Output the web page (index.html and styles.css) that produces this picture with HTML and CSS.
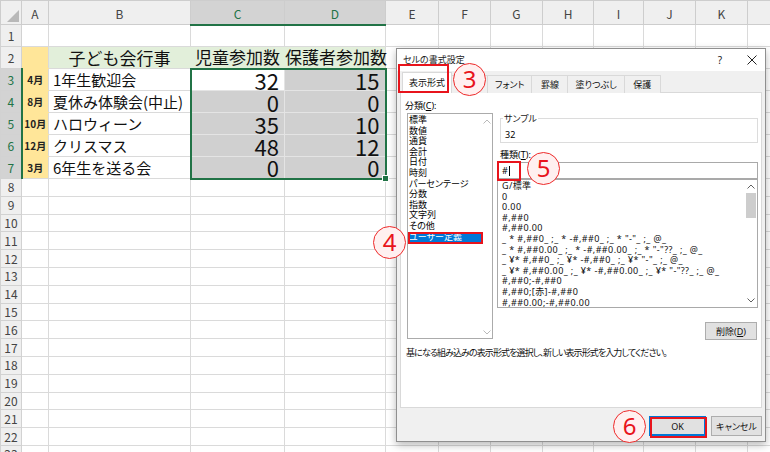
FILE: index.html
```html
<!DOCTYPE html>
<html lang="ja">
<head>
<meta charset="utf-8">
<title>セルの書式設定</title>
<link rel="stylesheet" href="styles.css">
</head>
<body>
<table class="sheet">
  <colgroup>
    <col class="w-rh"><col class="w-a"><col class="w-b"><col class="w-c"><col class="w-d"><col class="w-e"><col class="w-f"><col class="w-g"><col class="w-h"><col class="w-i"><col class="w-j"><col class="w-k"><col class="w-l">
  </colgroup>
  <thead>
    <tr><th class="corner"><span class="tri"></span></th><th>A</th><th>B</th><th class="sel">C</th><th class="sel">D</th><th>E</th><th>F</th><th>G</th><th>H</th><th>I</th><th>J</th><th>K</th><th>L</th></tr>
  </thead>
  <tbody>
    <tr class="tall"><th>1</th><td></td><td></td><td></td><td></td><td></td><td></td><td></td><td></td><td></td><td></td><td></td><td></td></tr>
    <tr class="tall"><th>2</th><td class="mon"></td><td class="hd">子ども会行事</td><td class="hd">児童参加数</td><td class="hd end">保護者参加数</td><td></td><td></td><td></td><td></td><td></td><td></td><td></td><td></td></tr>
    <tr class="tall"><th class="sel">3</th><td class="mon">4月</td><td class="ev">1年生歓迎会</td><td class="num act st sl">32</td><td class="num st sr">15</td><td></td><td></td><td></td><td></td><td></td><td></td><td></td><td></td></tr>
    <tr class="tall"><th class="sel">4</th><td class="mon">8月</td><td class="ev">夏休み体験会(中止)</td><td class="num sl">0</td><td class="num sr">0</td><td></td><td></td><td></td><td></td><td></td><td></td><td></td><td></td></tr>
    <tr class="tall"><th class="sel">5</th><td class="mon">10月</td><td class="ev">ハロウィーン</td><td class="num sl">35</td><td class="num sr">10</td><td></td><td></td><td></td><td></td><td></td><td></td><td></td><td></td></tr>
    <tr class="tall"><th class="sel">6</th><td class="mon">12月</td><td class="ev">クリスマス</td><td class="num sl">48</td><td class="num sr">12</td><td></td><td></td><td></td><td></td><td></td><td></td><td></td><td></td></tr>
    <tr class="tall"><th class="sel">7</th><td class="mon end">3月</td><td class="ev">6年生を送る会</td><td class="num sl sb">0</td><td class="num sr sb">0</td><td></td><td></td><td></td><td></td><td></td><td></td><td></td><td></td></tr>
    <tr class="sm"><th>8</th><td></td><td></td><td></td><td></td><td></td><td></td><td></td><td></td><td></td><td></td><td></td><td></td></tr>
    <tr class="sm"><th>9</th><td></td><td></td><td></td><td></td><td></td><td></td><td></td><td></td><td></td><td></td><td></td><td></td></tr>
    <tr class="sm"><th>10</th><td></td><td></td><td></td><td></td><td></td><td></td><td></td><td></td><td></td><td></td><td></td><td></td></tr>
    <tr class="sm"><th>11</th><td></td><td></td><td></td><td></td><td></td><td></td><td></td><td></td><td></td><td></td><td></td><td></td></tr>
    <tr class="sm"><th>12</th><td></td><td></td><td></td><td></td><td></td><td></td><td></td><td></td><td></td><td></td><td></td><td></td></tr>
    <tr class="sm"><th>13</th><td></td><td></td><td></td><td></td><td></td><td></td><td></td><td></td><td></td><td></td><td></td><td></td></tr>
    <tr class="sm"><th>14</th><td></td><td></td><td></td><td></td><td></td><td></td><td></td><td></td><td></td><td></td><td></td><td></td></tr>
    <tr class="sm"><th>15</th><td></td><td></td><td></td><td></td><td></td><td></td><td></td><td></td><td></td><td></td><td></td><td></td></tr>
    <tr class="sm"><th>16</th><td></td><td></td><td></td><td></td><td></td><td></td><td></td><td></td><td></td><td></td><td></td><td></td></tr>
    <tr class="sm"><th>17</th><td></td><td></td><td></td><td></td><td></td><td></td><td></td><td></td><td></td><td></td><td></td><td></td></tr>
    <tr class="sm"><th>18</th><td></td><td></td><td></td><td></td><td></td><td></td><td></td><td></td><td></td><td></td><td></td><td></td></tr>
    <tr class="sm"><th>19</th><td></td><td></td><td></td><td></td><td></td><td></td><td></td><td></td><td></td><td></td><td></td><td></td></tr>
    <tr class="sm"><th>20</th><td></td><td></td><td></td><td></td><td></td><td></td><td></td><td></td><td></td><td></td><td></td><td></td></tr>
    <tr class="sm"><th>21</th><td></td><td></td><td></td><td></td><td></td><td></td><td></td><td></td><td></td><td></td><td></td><td></td></tr>
    <tr class="sm"><th>22</th><td></td><td></td><td></td><td></td><td></td><td></td><td></td><td></td><td></td><td></td><td></td><td></td></tr>
    <tr class="sm"><th>23</th><td></td><td></td><td></td><td></td><td></td><td></td><td></td><td></td><td></td><td></td><td></td><td></td></tr>
  </tbody>
</table>
<div class="handle"></div>

<div class="dialog">
  <div class="titlebar">
    <span class="dtitle">セルの書式設定</span>
    <span class="help">?</span>
    <span class="close"><svg width="10" height="10" viewBox="0 0 10 10"><path d="M0.5 0.5L9.5 9.5M9.5 0.5L0.5 9.5" stroke="#222" stroke-width="1"/></svg></span>
  </div>
  <div class="dbody">
    <div class="tabs">
      <div class="tab on">表示形式</div>
      <div class="tab">配置</div>
      <div class="tab">フォント</div>
      <div class="tab">罫線</div>
      <div class="tab">塗りつぶし</div>
      <div class="tab">保護</div>
    </div>
    <div class="panel">
      <div class="prow">
        <div class="lcol">
          <div class="lbl">分類(<u>C</u>):</div>
          <div class="catlist">
            <div class="citems">
              <div>標準</div>
              <div>数値</div>
              <div>通貨</div>
              <div>会計</div>
              <div>日付</div>
              <div>時刻</div>
              <div>パーセンテージ</div>
              <div>分数</div>
              <div>指数</div>
              <div>文字列</div>
              <div>その他</div>
              <div class="on">ユーザー定義</div>
            </div>
            <div class="cscroll">
              <svg width="8" height="5" viewBox="0 0 8 5"><path d="M0.5 4.5L4 1L7.5 4.5" fill="none" stroke="#b9b9b9"/></svg>
              <svg width="8" height="5" viewBox="0 0 8 5"><path d="M0.5 0.5L4 4L7.5 0.5" fill="none" stroke="#b9b9b9"/></svg>
            </div>
          </div>
        </div>
        <div class="rcol">
          <fieldset class="sample">
            <legend>サンプル</legend>
            <div class="sval">32</div>
          </fieldset>
          <div class="lbl2">種類(<u>T</u>):</div>
          <div class="inp">#<span class="caret"></span></div>
          <div class="fmtlist">
            <div class="fitems">
              <div>G/標準</div>
              <div>0</div>
              <div>0.00</div>
              <div>#,##0</div>
              <div>#,##0.00</div>
              <div>_ * #,##0_ ;_ * -#,##0_ ;_ * "-"_ ;_ @_</div>
              <div>_ * #,##0.00_ ;_ * -#,##0.00_ ;_ * "-"??_ ;_ @_</div>
              <div>_ ¥* #,##0_ ;_ ¥* -#,##0_ ;_ ¥* "-"_ ;_ @_</div>
              <div>_ ¥* #,##0.00_ ;_ ¥* -#,##0.00_ ;_ ¥* "-"??_ ;_ @_</div>
              <div>#,##0;-#,##0</div>
              <div>#,##0;[赤]-#,##0</div>
              <div>#,##0.00;-#,##0.00</div>
            </div>
            <div class="vscroll">
              <svg class="chev" width="8" height="5" viewBox="0 0 8 5"><path d="M0.5 4.5L4 1L7.5 4.5" fill="none" stroke="#606060"/></svg>
              <div class="thumb"></div>
              <div class="track"></div>
              <svg class="chev" width="8" height="5" viewBox="0 0 8 5"><path d="M0.5 0.5L4 4L7.5 0.5" fill="none" stroke="#606060"/></svg>
            </div>
          </div>
          <div class="delrow"><button class="btn del">削除(<u>D</u>)</button></div>
        </div>
      </div>
      <p class="desc">基になる組み込みの表示形式を選択し、新しい表示形式を入力してください。</p>
    </div>
    <div class="foot">
      <button class="btn ok">OK</button>
      <button class="btn cancel">キャンセル</button>
    </div>
  </div>
</div>

<div class="rbox rb-tab"></div>
<div class="rbox rb-cat"></div>
<div class="rbox rb-inp"></div>
<div class="rbox rb-ok"></div>

<div class="circ c3">3</div>
<div class="circ c4">4</div>
<div class="circ c5">5</div>
<div class="circ c6">6</div>
</body>
</html>
```

FILE: styles.css
```css
* { box-sizing: border-box; }
html, body { margin: 0; padding: 0; }
body {
  width: 770px;
  height: 452px;
  overflow: hidden;
  position: relative;
  background: #fff;
  font-family: "Noto Sans CJK JP", "Noto Sans", sans-serif;
  color: #000;
}

/* ---------- spreadsheet ---------- */
.sheet { border-collapse: collapse; table-layout: fixed; width: 799px; }
.w-rh { width: 21px; }
.w-a { width: 27px; }
.w-b { width: 142px; }
.w-c { width: 94px; }
.w-d { width: 101px; }
.w-e { width: 53px; }
.w-f, .w-g, .w-j, .w-k, .w-l { width: 52px; }
.w-h { width: 51px; }
.w-i { width: 50px; }

.sheet th, .sheet td {
  border: 1px solid #dadada;
  padding: 0;
  white-space: nowrap;
  overflow: visible;
}
.sheet thead tr { height: 24px; }
.sheet thead th {
  font-size: 12px;
  font-weight: 400;
  color: #444;
  background: #efefef;
  border-color: #cdcdcd;
  vertical-align: bottom;
  padding-bottom: 2px;
  line-height: 16px;
  text-align: center;
}
.sheet thead th.corner { vertical-align: bottom; padding: 0 2px 2px 0; }
.tri {
  display: block;
  width: 0;
  height: 0;
  margin-left: auto;
  border-left: 12px solid transparent;
  border-bottom: 12px solid #b8b8b8;
}
.sheet thead th.sel {
  background: #d3d3d3;
  color: #217346;
  border-bottom: 2px solid #217346;
}
.sheet tbody th {
  font-size: 12px;
  font-weight: 400;
  color: #444;
  background: #efefef;
  border-color: #d2d2d2;
  text-align: center;
  line-height: 14px;
}
.sheet tbody th.sel {
  background: #d3d3d3;
  color: #217346;
  border-right: 2px solid #217346;
}
.sheet tr.tall { height: 22px; }
.sheet tr.sm { height: 17.8px; }

.mon {
  background: #ffe699;
  border-top-color: #ffe699 !important;
  border-bottom-color: #ffe699 !important;
  font-size: 10px;
  font-weight: 700;
  text-align: center;
  color: #222;
}
.sheet td.mon.end { border-bottom-color: #dadada !important; }
.hd {
  background: #e2efda;
  border-right-color: #e2efda !important;
  font-size: 17px;
  line-height: 20px;
  text-align: center;
  color: #111;
}
.sheet td.hd.end { border-right-color: #dadada !important; }
.ev { font-size: 15px; line-height: 20px; padding-left: 4px !important; color: #111; }
.num {
  font-size: 22px;
  line-height: 20px;
  text-align: right;
  padding-right: 5px !important;
  background: #d0d0d0;
  border-color: #e4e4e4 !important;
  color: #111;
}
.num.act { background: #fff; }
.sheet td.st { border-top: 2px solid #217346 !important; }
.sheet td.sb { border-bottom: 2px solid #217346 !important; }
.sheet td.sl { border-left: 2px solid #217346 !important; }
.sheet td.sr { border-right: 2px solid #217346 !important; }

.handle {
  position: absolute;
  left: 382px;
  top: 175px;
  width: 7px;
  height: 7px;
  background: #217346;
  border: 1px solid #fff;
}

/* ---------- dialog ---------- */
.dialog {
  position: absolute;
  left: 396px;
  top: 48px;
  width: 370px;
  height: 394px;
  border: 1px solid #8f8f8f;
  background: #f0f0f0;
  box-shadow: 0 3px 8px rgba(0, 0, 0, 0.28);
  display: flex;
  flex-direction: column;
  font-family: "Noto Sans", "Noto Sans CJK JP", sans-serif;
  font-size: 9px;
  font-feature-settings: "palt";
  color: #000;
  z-index: 2;
}
.titlebar {
  height: 22px;
  flex: none;
  background: #fff;
  display: flex;
  align-items: center;
  padding-left: 6px;
}
.dtitle { flex: 1; font-size: 9px; color: #222; line-height: 12px; }
.help { width: 14px; text-align: center; margin-right: 17px; font-size: 10px; color: #222; }
.close { width: 16px; margin-right: 5px; display: flex; justify-content: center; }

.dbody {
  flex: 1;
  display: flex;
  flex-direction: column;
  padding: 1px 3px 0;
}
.tabs {
  display: flex;
  align-items: flex-end;
  height: 21px;
  padding-left: 2px;
  margin-bottom: -1px;
  position: relative;
  z-index: 1;
}
.tab {
  height: 18px;
  line-height: 17px;
  padding: 0 7px;
  min-width: 37px;
  text-align: center;
  border: 1px solid #d9d9d9;
  border-bottom: none;
  margin-left: -1px;
  background: #f0f0f0;
  color: #111;
  white-space: nowrap;
}
.tab:first-child { margin-left: 0; }
.tab.on { height: 21px; line-height: 20px; background: #fff; padding: 0 6px; }

.panel {
  height: 316px;
  flex: none;
  background: #fff;
  border: 1px solid #d9d9d9;
  padding: 7px 3px 0 4px;
}
.prow { display: flex; }
.lcol { width: 88px; }
.lbl { line-height: 11px; height: 13px; white-space: nowrap; }
.catlist {
  margin-left: 2px;
  width: 86px;
  height: 226px;
  border: 1px solid #ababab;
  display: flex;
  padding: 1px 0 0 1px;
}
.citems { width: 72px; line-height: 10.6px; white-space: nowrap; }
.citems .on { background: #0078d7; color: #fff; }
.cscroll {
  flex: 1;
  display: flex;
  flex-direction: column;
  justify-content: space-between;
  align-items: center;
  padding: 4px 0 3px;
}

.rcol { margin-left: 4px; width: 261px; }
.sample {
  margin: 13px 0 0 3px;
  padding: 0 2px 2px;
  border: 1px solid #dcdcdc;
  width: 258px;
  min-width: 0;
}
.sample legend { padding: 0 1px; line-height: 11px; color: #222; }
.sval { padding: 5px 0 0 2px; line-height: 11px; }
.lbl2 { margin-top: 6px; line-height: 11px; margin-bottom: 2px; padding-left: 3px; white-space: nowrap; }
.inp {
  height: 17px;
  border: 1px solid #a9a9a9;
  padding-left: 4px;
  line-height: 15px;
  display: flex;
  align-items: center;
}
.caret { display: inline-block; width: 1px; height: 10px; background: #000; margin-left: 1px; }
.fmtlist {
  height: 129px;
  border: 1px solid #a9a9a9;
  display: flex;
  background: #fff;
}
.fitems {
  flex: 1;
  padding: 1px 0 0 4px;
  line-height: 10.6px;
  overflow: hidden;
  color: #111;
  letter-spacing: 0.4px;
}
.fitems div { white-space: pre; height: 10.6px; }
.vscroll {
  width: 13px;
  display: flex;
  flex-direction: column;
  align-items: center;
  background: #fff;
}
.chev { flex: none; margin: 4px 0; }
.thumb { width: 10px; height: 25px; background: #cdcdcd; flex: none; }
.track { flex: 1; }
.delrow { display: flex; justify-content: flex-end; margin-top: 14px; padding-right: 1px; }

.btn {
  font-family: inherit;
  font-size: 9px;
  font-feature-settings: "palt";
  background: #e1e1e1;
  border: 1px solid #adadad;
  color: #111;
  padding: 0;
  margin: 0;
}
.del { width: 52px; height: 18px; }
.desc { margin: 7px 0 0 1px; line-height: 11px; color: #111; letter-spacing: -0.9px; white-space: nowrap; }

.foot {
  display: flex;
  justify-content: flex-end;
  gap: 5px;
  margin-top: 8px;
}
.ok { width: 57px; height: 20px; border: 1px solid #0078d7; box-shadow: inset 0 0 0 1px #0078d7; }
.cancel { width: 51px; height: 20px; }

/* ---------- annotations ---------- */
.rbox { position: absolute; border: 2px solid #e8141c; z-index: 5; }
.rb-tab { left: 398px; top: 64px; width: 51px; height: 29px; }
.rb-cat { left: 408px; top: 232px; width: 75px; height: 12px; }
.rb-inp { left: 497px; top: 161px; width: 24px; height: 20px; }
.rb-ok { left: 650px; top: 417px; width: 57px; height: 21px; }

.circ {
  position: absolute;
  width: 33px;
  height: 33px;
  border-radius: 50%;
  border: 1.5px solid #ee2a2a;
  background: #fff0f0;
  color: #e8141c;
  font-family: "Noto Sans", "Liberation Sans", sans-serif;
  font-size: 24px;
  line-height: 29px;
  text-align: center;
  z-index: 6;
}
.c3 { left: 453px; top: 63px; }
.c4 { left: 373px; top: 226px; }
.c5 { left: 527px; top: 152px; }
.c6 { left: 613px; top: 410px; }
```
